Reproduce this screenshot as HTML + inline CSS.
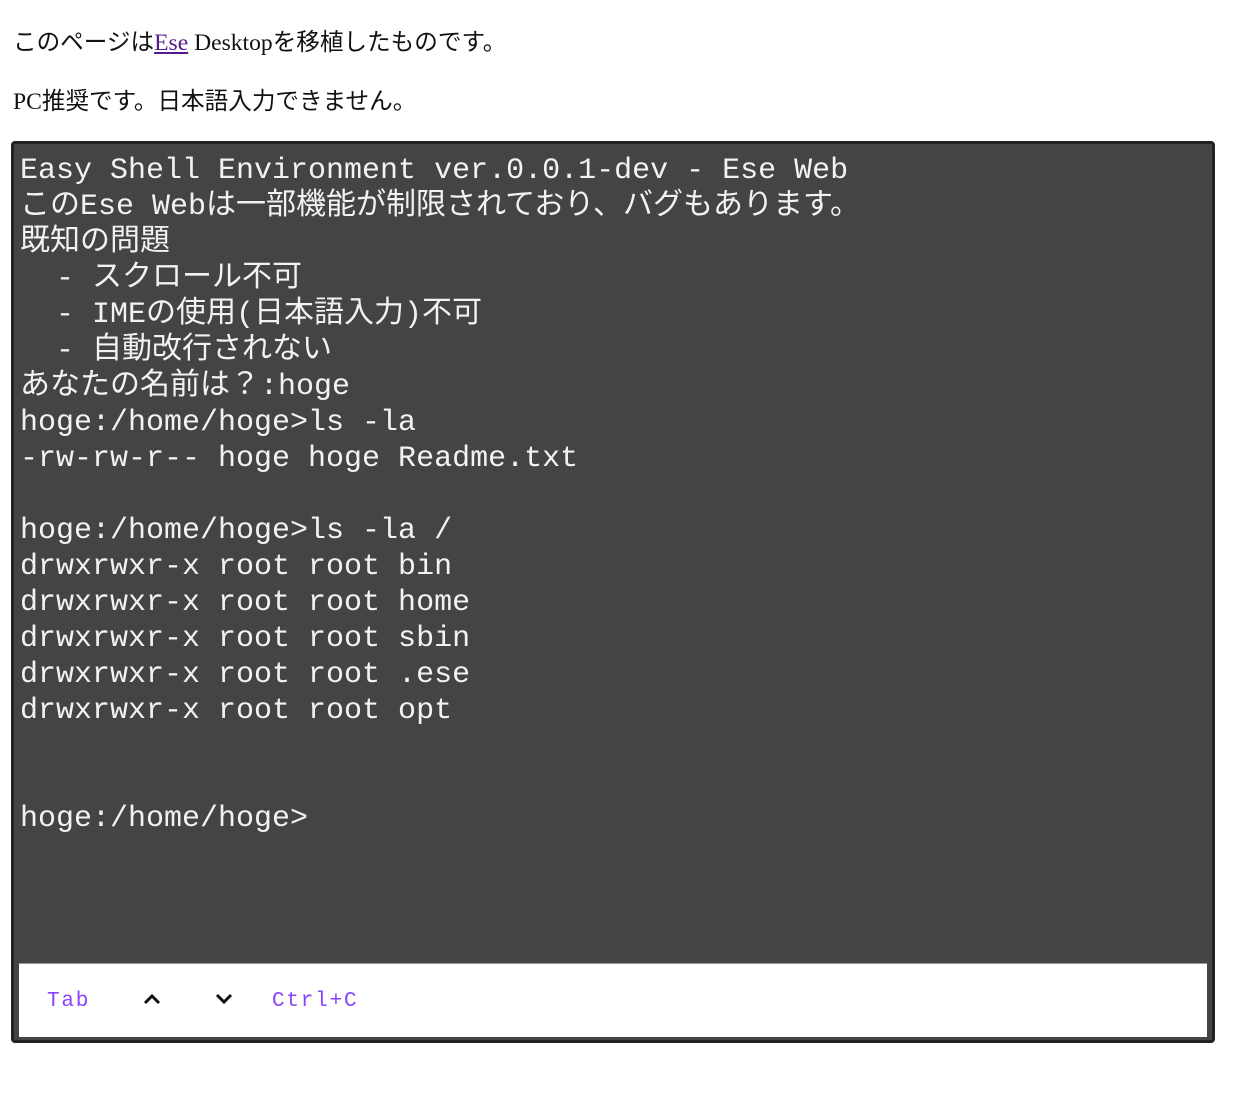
<!DOCTYPE html>
<html><head><meta charset="utf-8"><style>
body{margin:0;background:#fff;width:1240px;height:1096px;position:relative;overflow:hidden}
.t{position:absolute;left:13px;font-family:"Liberation Serif","Noto Sans CJK JP",serif;font-size:23.6px;color:#111;white-space:nowrap;line-height:30px}
a{color:#551a8b;text-decoration:underline}
.box{position:absolute;left:11px;top:141px;width:1198px;height:896px;background:#444;border:3px solid #222;border-radius:4px}
pre{position:absolute;left:6px;top:9px;margin:0;font-family:"Liberation Mono","Noto Sans CJK JP",monospace;font-size:30px;line-height:36px;color:#f2f2f2}
.bar{position:absolute;left:5px;top:819px;width:1188px;height:73px;background:#fff;border-top:1px solid #999}
.b{position:absolute;top:26px;font-family:"Liberation Mono",monospace;font-size:21px;color:#8a44ff;letter-spacing:1.8px}
</style></head><body>
<div class="t" style="top:28px">このページは<a>Ese</a> Desktopを移植したものです。</div>
<div class="t" style="top:87px">PC推奨です。日本語入力できません。</div>
<div class="box">
<pre>Easy Shell Environment ver.0.0.1-dev - Ese Web
このEse Webは一部機能が制限されており、バグもあります。
既知の問題
  - スクロール不可
  - IMEの使用(日本語入力)不可
  - 自動改行されない
あなたの名前は？:hoge
hoge:/home/hoge>ls -la
-rw-rw-r-- hoge hoge Readme.txt

hoge:/home/hoge>ls -la /
drwxrwxr-x root root bin
drwxrwxr-x root root home
drwxrwxr-x root root sbin
drwxrwxr-x root root .ese
drwxrwxr-x root root opt


hoge:/home/hoge></pre>
<div class="bar">
<span class="b" style="left:28px">Tab</span>
<svg style="position:absolute;left:124px;top:29px" width="18" height="12" viewBox="0 0 18 12"><path d="M2 10 L9 3 L16 10" fill="none" stroke="#111" stroke-width="3"/></svg>
<svg style="position:absolute;left:196px;top:29px" width="18" height="12" viewBox="0 0 18 12"><path d="M2 2 L9 9 L16 2" fill="none" stroke="#111" stroke-width="3"/></svg>
<span class="b" style="left:253px">Ctrl+C</span>
</div>
</div>
</body></html>
